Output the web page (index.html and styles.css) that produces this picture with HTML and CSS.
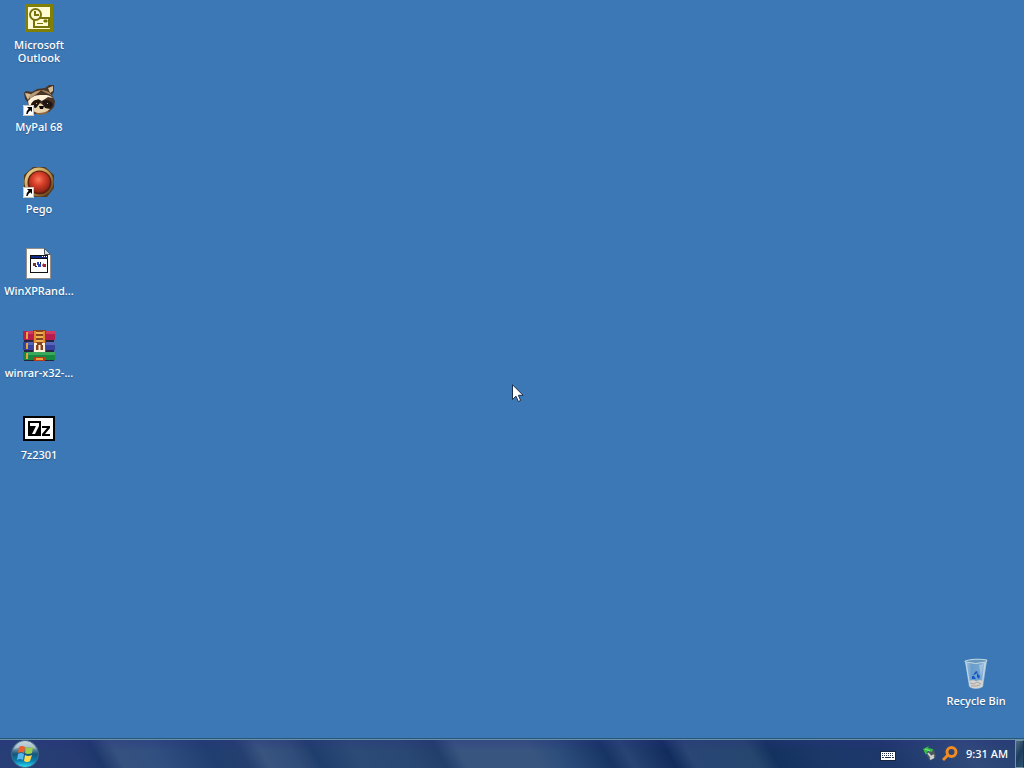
FILE: index.html
```html
<!DOCTYPE html>
<html lang="en">
<head>
<meta charset="utf-8">
<title>Desktop</title>
<link rel="stylesheet" href="styles.css">
</head>
<body>
<svg class="defs" width="0" height="0" aria-hidden="true">
  <symbol id="shortcut" viewBox="0 0 11 11">
    <path d="M0 0h11v11H0z" fill="#fff"/>
    <path d="M.5.500h10v10H.5z" fill="none" stroke="#c8c4b8" stroke-width="1"/>
    <path d="M4 2h5v5L7.300 5.300Q5 7 4.600 9H3.200Q3 6 5.700 3.700z" fill="#000"/>
  </symbol>
</svg>
<main class="desktop">
  <nav class="icons" aria-label="Desktop icons">
    <button class="shortcut" type="button">
      <svg class="art" viewBox="0 0 32 32" aria-hidden="true">
        <path d="M2 2h28v28H2z" fill="#827f05"/>
        <path d="M5 5h22v22H5z" fill="#fffbd2"/>
        <path d="M11 16h15v9H11z" fill="#fffbd2" stroke="#77740c" stroke-width="2"/>
        <path d="M14 21.500h6M21 18h3v2h-3z" fill="#77740c" stroke="#77740c" stroke-width="1"/>
        <circle cx="12.500" cy="12.500" r="5.500" fill="#fffbd2" stroke="#77740c" stroke-width="2"/>
        <path d="M12 9v4h4" fill="none" stroke="#77740c" stroke-width="2"/>
      </svg>
      <span class="label">Microsoft Outlook</span>
    </button>
    <button class="shortcut" type="button">
      <svg class="art" viewBox="0 0 32 32" aria-hidden="true">
        <path d="M1 9l2-2 6 1 5-3 8-1 4-3 5 0 0 7-2 3 3 6-1 6-5 5-5 2-9 0-5-3-2-8-3-4z" fill="#493325"/>
        <path d="M2 9l6 1-3 6-2-4zM25 4l5-2 0 5-3 2z" fill="#d4bc97"/>
        <path d="M6 13c2-4 7-6 12-7-3 4-7 5-11 9z" fill="#b89b78"/>
        <path d="M18 6c5 0 9 2 11 6-4-3-8-3-11-6z" fill="#9b815f"/>
        <path d="M5 17c3-3 6-6 12-6 4 0 9-1 13 3l-5-1-6 4-4-2-6 5-3 2z" fill="#fff0da"/>
        <path d="M8 20c2-4 5-5 9-4l1 5-5 4-4-1zM19 17c4-2 8-1 11 3-1 3-3 5-6 5l-4-3z" fill="#211712"/>
        <path d="M8 23l5 1 4-5 3 2 2 3 5 1-5 4h-8l-6-3z" fill="#e9d2ae"/>
        <path d="M16 22l5 0-1 3-3 0z" fill="#090909"/>
        <path d="M13 19h1v1h-1zM24 19h1v1h-1z" fill="#e4a158"/>
        <path d="M11 28c4 2 10 1 16-2l-4 4-8 1z" fill="#8e693e"/>
        <use href="#shortcut" x="0" y="21" width="11" height="11"/>
      </svg>
      <span class="label">MyPal 68</span>
    </button>
    <button class="shortcut" type="button">
      <svg class="art" viewBox="0 0 32 32" aria-hidden="true">
        <defs>
          <linearGradient id="rim" x2="1" y2="1"><stop offset="0" stop-color="#eee3a2"/><stop offset=".45" stop-color="#c69a50"/><stop offset="1" stop-color="#513018"/></linearGradient>
          <radialGradient id="ruby" cx=".45" cy=".38" r=".62"><stop offset="0" stop-color="#fb795f"/><stop offset=".45" stop-color="#d9402a"/><stop offset="1" stop-color="#8d2213"/></radialGradient>
        </defs>
        <path d="M10 1h12l9 8v13l-7 9H12L1 24V9z" fill="#52391e"/>
        <circle cx="16" cy="16" r="14.500" fill="url(#rim)"/>
        <circle cx="16.500" cy="16.500" r="12" fill="#60200f"/>
        <circle cx="16.500" cy="16" r="10.500" fill="url(#ruby)"/>
        <use href="#shortcut" x="0" y="21" width="11" height="11"/>
      </svg>
      <span class="label">Pego</span>
    </button>
    <button class="shortcut" type="button">
      <svg class="art" viewBox="0 0 32 32" aria-hidden="true">
        <path d="M3.500.500h18l6 6v24h-24z" fill="#fffefa" stroke="#918e8b"/>
        <path d="M21.500.500v6h6z" fill="#d3dbe4" stroke="#535a63"/>
        <path d="M7 7h18v18H7z" fill="#111"/>
        <path d="M8 11h16v13H8z" fill="#fff"/>
        <path d="M8 8h16v2H8z" fill="#142a89"/>
        <path d="M19 8h1v1h-1zM21 8h1v1h-1zM23 8h1v1h-1z" fill="#fff"/>
        <path d="M10 15h3v3h-3z" fill="#76342e"/>
        <path d="M14 14h2v2h2v3h-3v-2h-1z" fill="#2346bd"/>
        <path d="M19 17l2-2v1h2v3h-3z" fill="#a02a32"/>
        <path d="M12 18h2v1h-2zM17 14h1v2h-1z" fill="#20252b"/>
      </svg>
      <span class="label">WinXPRand...</span>
    </button>
    <button class="shortcut" type="button">
      <svg class="art" viewBox="0 0 32 32" aria-hidden="true">
        <path d="M0 1h32v9H0z" fill="#b51e4d"/><path d="M4 1h28v3H4z" fill="#d43b62"/>
        <path d="M0 12h32v8H0z" fill="#36439f"/><path d="M4 12h28v3H4z" fill="#5667bb"/>
        <path d="M0 22h32v8H0z" fill="#168840"/><path d="M4 22h28v3H4z" fill="#3aa85d"/>
        <path d="M1 10h30v2H1zM1 20h30v2H1zM1 30h30v1H1z" fill="#28233e"/>
        <path d="M3 2h2v7H3zM3 13h2v6H3zM3 23h2v6H3z" fill="#e9a43d"/>
        <path d="M10 0h13v22H10z" fill="#8b421e"/>
        <path d="M11 1h2v12h-2zM20 1h2v12h-2z" fill="#e58b2e"/>
        <path d="M13 2h7v2h-7zM13 6h7v2h-7zM13 10h7v2h-7z" fill="#efb252"/>
        <path d="M14 14h-2v7h9v-7h-2M16.500 15v6" fill="none" stroke="#fff2d8" stroke-width="2"/>
        <path d="M11 27h11v4H11z" fill="#b43b20"/><path d="M13 28h7v2h-7z" fill="#f2a23a"/>
      </svg>
      <span class="label">winrar-x32-...</span>
    </button>
    <button class="shortcut" type="button">
      <svg class="art" viewBox="0 0 32 32" aria-hidden="true">
        <path d="M0 4h32v25H0z" fill="#000"/><path d="M2 6h28v21H2z" fill="#fff"/>
        <path d="M5 9h13v15H5z" fill="#000"/>
        <path d="M7 11h9v3l-4 8H9l4-8H7z" fill="#fff"/>
        <path d="M19 14h8v2l-5 6h5v2h-8v-2l5-6h-5z" fill="#000"/>
      </svg>
      <span class="label">7z2301</span>
    </button>
  </nav>
  <button class="shortcut bin" type="button">
    <svg class="art" viewBox="0 0 32 32" aria-hidden="true">
      <defs><linearGradient id="glass" x2="1" y2="0"><stop offset="0" stop-color="#a5c6df"/><stop offset=".3" stop-color="#699dcc"/><stop offset=".7" stop-color="#75a5cf"/><stop offset="1" stop-color="#bdd3e2"/></linearGradient></defs>
      <path d="M5 3l22-1-4 27q-7 4-14 0z" fill="url(#glass)"/>
      <path d="M5 3q9-3 22-1l-1 2q-10 3-21 0z" fill="#6797bd" stroke="#c5d9e5"/>
      <path d="M6 5l4 23M25 5l-3 23" stroke="#c4dae8" fill="none"/>
      <path d="M9 23l4-1 3 1 4-1 3 1-1 6q-7 3-12 0z" fill="#d5d1cd"/>
      <path d="M10 25l4 1 3-2 4 2M11 28l5 0 4-1" stroke="#a7a5a6" fill="none"/>
      <path d="M13 17l3-4 2 1-2 2zM17 15l3 3-1 3-2-2zM12 18l2 0 2 3-4 0z" fill="#1757c8"/>
      <path d="M19 7l4-1-2 13z" fill="#b6d2e7" opacity=".6"/>
    </svg>
    <span class="label">Recycle Bin</span>
  </button>
  <svg class="pointer" viewBox="0 0 12 19" aria-hidden="true"><path d="M.5.800v14.700l3.500-3.300 2.300 5.300 2.400-1-2.300-5.200h4.700z" fill="#fff" stroke="#1b304d"/></svg>
</main>
<footer class="taskbar">
  <button class="start" type="button" aria-label="Start">
    <svg class="orb" viewBox="0 0 28 28" aria-hidden="true">
      <defs>
        <linearGradient id="ball" x2="0" y2="1"><stop offset="0" stop-color="#b5c8d2"/><stop offset=".3" stop-color="#7196ab"/><stop offset=".5" stop-color="#145679"/><stop offset=".75" stop-color="#087eaf"/><stop offset="1" stop-color="#32e1f5"/></linearGradient>
      </defs>
      <circle cx="14" cy="14" r="13.500" fill="url(#ball)" stroke="#416a88"/>
      <path d="M3 9Q7 1 14 1t11 8q-10-4-22 0z" fill="#dbe5e8" opacity=".5"/>
      <path d="M8 7q3-2 6 0l-1 6q-3-2-6 0z" fill="#ed602e"/>
      <path d="M15 7q3 2 7 0l-1 6q-4 2-7 0z" fill="#9bce4b"/>
      <path d="M7 14q3-2 6 0l-1 6q-3-2-6 0z" fill="#55b8ed"/>
      <path d="M14 15q3 2 7 0l-2 6q-3 2-6 0z" fill="#ffd84d"/>
    </svg>
  </button>
  <div class="tray">
    <button class="tool keyboard" type="button" aria-label="On-screen keyboard">
      <svg class="glyph" viewBox="0 0 16 16" aria-hidden="true">
        <path d="M0 5h16v10H0z" fill="#17243e"/><path d="M1 6h14v8H1z" fill="#fff"/>
        <path d="M2 7.500h12M2 9.500h12" stroke="#27334c" stroke-dasharray="1 1"/><path d="M2 11.500h2M5 11.500h6M12 11.500h2" stroke="#27334c"/>
      </svg>
    </button>
    <button class="tool" type="button" aria-label="Safely remove hardware">
      <svg class="glyph" viewBox="0 0 16 16" aria-hidden="true">
        <path d="M5 7l7-4 2 8-6 4-3-5z" fill="#4b565b"/><path d="M6 7l3 4 3-2M8 13l4-2" stroke="#cbd4d5" stroke-width="2" fill="none"/>
        <path d="M1 3l6-3-1 2 5 1-1 3-4-1-2 4z" fill="#35bd48"/><path d="M3 3l5 2" stroke="#90e68b"/>
      </svg>
    </button>
    <button class="tool" type="button" aria-label="Search">
      <svg class="glyph" viewBox="0 0 16 16" aria-hidden="true">
        <circle cx="9.500" cy="6" r="4.500" fill="none" stroke="#f28c22" stroke-width="3"/><path d="M6 9l-5 5" stroke="#f28c22" stroke-width="3"/>
      </svg>
    </button>
    <time class="clock" datetime="09:31">9:31 AM</time>
  </div>
  <button class="peek" type="button" aria-label="Show desktop"></button>
</footer>
</body>
</html>
```
FILE: styles.css
```css
* { box-sizing: border-box; }
body {
  margin: 0;
  min-height: 100vh;
  display: flex;
  flex-direction: column;
  background: #3c78b5;
  color: #fff;
  font: 500 11px/13px "Noto Sans", "Open Sans", sans-serif;
}
button {
  padding: 0;
  border: 0;
  background: none;
  color: inherit;
  font: inherit;
}
svg { display: block; }
.defs { position: absolute; }
.desktop {
  position: relative;
  flex: 1;
  display: flex;
  justify-content: space-between;
  padding: 2px 9px 0 0;
}
.icons {
  display: flex;
  flex-direction: column;
}
.shortcut {
  width: 78px;
  height: 82px;
  display: flex;
  flex-direction: column;
  align-items: center;
  gap: 4px;
}
.art {
  width: 32px;
  height: 32px;
  flex: none;
}
.label {
  max-width: 72px;
  text-align: center;
  text-shadow: 0 1px 1px #2b5a8c;
}
.bin {
  align-self: flex-end;
  height: 80px;
}
.pointer {
  position: absolute;
  left: 50%;
  top: 384px;
  width: 12px;
  height: 19px;
}
.taskbar {
  height: 30px;
  display: flex;
  align-items: center;
  border-top: 1px solid #285678;
  box-shadow: inset 0 1px #6795a8;
  background:
    linear-gradient(#302e8855, #302e8800 40%),
    linear-gradient(60deg, #273f76 0, #263c73 8%, #1e386c 10%, #35517f 12%, #304f80 16%, #203e70 21%, #243f70 24%, #38547f 26%, #304c79 29%, #203e6d 31%, #2c4b76 35%, #294773 40%, #223e6b 43%, #385580 45%, #385580 52%, #2a4b79 55%, #173465 59%, #274474 61%, #112c5d 65%, #294674 67%, #26466f 73%, #14325f 75%, #1b3869 80%, #1d376b 86%, #304a7b 94%, #233f6f 100%);
}
.start {
  margin-left: 11px;
}
.orb {
  width: 28px;
  height: 28px;
}
.tray {
  margin-left: auto;
  display: flex;
  align-items: center;
  gap: 4px;
}
.glyph {
  width: 16px;
  height: 16px;
}
.keyboard { margin-right: 22px; }
.clock {
  margin: 0 7px 0 4px;
}
.peek {
  align-self: stretch;
  width: 9px;
  margin-top: 1px;
  border: 1px solid #7792a0;
  border-right-color: #1b3454;
  background: linear-gradient(120deg, #4e6e85, #1d3c5e 50%, #2c5272);
}
```
